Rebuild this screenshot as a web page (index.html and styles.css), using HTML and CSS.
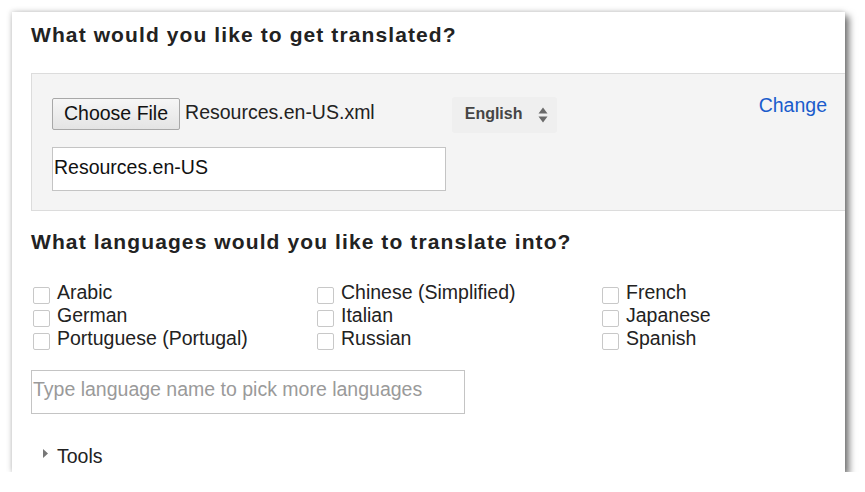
FILE: index.html
```html
<!DOCTYPE html>
<html>
<head>
<meta charset="utf-8">
<link rel="stylesheet" href="styles.css">
</head>
<body>
<div class="window">
  <h2 class="heading first">What would you like to get translated?</h2>
  <div class="source-box">
    <div class="file-row">
      <button class="file-btn">Choose File</button>
      <span class="file-name">Resources.en-US.xml</span>
      <div class="lang-select">
        <span class="lang-label">English</span>
        <svg class="updown" width="10" height="16" viewBox="0 0 10 16"><path d="M5 0.5 L9.5 6.5 H0.5 Z M5 15.5 L9.5 9.5 H0.5 Z" fill="#6a6a6a"/></svg>
      </div>
      <a class="change" href="#">Change</a>
    </div>
    <div class="name-input">Resources.en-US</div>
  </div>
  <h2 class="heading second">What languages would you like to translate into?</h2>
  <div class="langs">
    <label class="lang"><span class="cb"></span>Arabic</label>
    <label class="lang"><span class="cb"></span>Chinese (Simplified)</label>
    <label class="lang"><span class="cb"></span>French</label>
    <label class="lang"><span class="cb"></span>German</label>
    <label class="lang"><span class="cb"></span>Italian</label>
    <label class="lang"><span class="cb"></span>Japanese</label>
    <label class="lang"><span class="cb"></span>Portuguese (Portugal)</label>
    <label class="lang"><span class="cb"></span>Russian</label>
    <label class="lang"><span class="cb"></span>Spanish</label>
  </div>
  <div class="lang-input">Type language name to pick more languages</div>
  <div class="tools">
    <svg class="tri" width="5" height="9" viewBox="0 0 5 9"><path d="M0 0 L5 4.5 L0 9 Z" fill="#777"/></svg>
    <span>Tools</span>
  </div>
</div>
</body>
</html>
```

FILE: styles.css
```css
html, body {
  margin: 0;
  padding: 0;
  background: #ffffff;
}
body {
  font-family: "Liberation Sans", Arial, sans-serif;
  font-size: 19.5px;
  color: #222;
}
.window {
  margin: 12px 0 0 12px;
  width: 833px;
  height: 460px;
  background: #fff;
  overflow: hidden;
  box-shadow: 4px 4px 7px rgba(0,0,0,0.55), -1px -1px 5px rgba(0,0,0,0.15);
  padding-left: 19px;
  box-sizing: border-box;
}
.heading {
  font-size: 21px;
  font-weight: bold;
  letter-spacing: 1.1px;
  color: #222;
  margin: 0;
  line-height: 24px;
}
.heading.first {
  padding-top: 11px;
  margin-bottom: 26px;
}
.source-box {
  width: 1000px;
  height: 138px;
  box-sizing: border-box;
  background: #f4f4f4;
  border: 1px solid #dcdcdc;
  padding: 24px 0 0 20px;
}
.file-row {
  display: flex;
  align-items: flex-start;
  width: 775px;
  height: 32px;
}
.file-btn {
  font-family: "Liberation Sans", Arial, sans-serif;
  font-size: 19.5px;
  color: #111;
  height: 32px;
  box-sizing: border-box;
  padding: 0 11px 2px;
  background: linear-gradient(#f6f6f6, #e4e4e4);
  border: 1px solid #a8a8a8;
  border-radius: 2px;
  line-height: 28px;
  margin: 0;
}
.file-name {
  margin-left: 5px;
  line-height: 29px;
  color: #222;
}
.lang-select {
  margin-left: 77px;
  margin-top: -1px;
  height: 36px;
  width: 105px;
  box-sizing: border-box;
  background: #efefef;
  border-radius: 3px;
  display: flex;
  align-items: center;
  padding: 0 0 2px 13px;
  font-size: 16px;
  font-weight: bold;
  color: #454545;
}
.lang-label {
  line-height: 20px;
}
.updown {
  margin-left: 16px;
  margin-top: 2px;
}
.change {
  margin-left: auto;
  margin-top: -5px;
  line-height: 24px;
  color: #1a5ccc;
  text-decoration: none;
}
.name-input {
  margin-top: 17px;
  width: 394px;
  height: 44px;
  box-sizing: border-box;
  background: #fff;
  border: 1px solid #c4c4c4;
  line-height: 38px;
  padding-left: 1px;
  color: #111;
}
.heading.second {
  margin-top: 19px;
}
.langs {
  display: grid;
  grid-template-columns: 284px 285px 1fr;
  margin-top: 27px;
  margin-left: 2px;
}
.lang {
  display: flex;
  align-items: flex-start;
  height: 23px;
  line-height: 23px;
  color: #222;
}
.cb {
  width: 17px;
  height: 17px;
  box-sizing: border-box;
  border: 1px solid #c8c8c8;
  border-radius: 2px;
  background: #fff;
  margin: 6px 7px 0 0;
}
.lang-input {
  margin-top: 20px;
  width: 434px;
  height: 44px;
  box-sizing: border-box;
  border: 1px solid #c4c4c4;
  line-height: 36px;
  padding-left: 1px;
  color: #9a9a9a;
}
.tools {
  margin-top: 30px;
  display: flex;
  align-items: flex-start;
  line-height: 24px;
  padding-left: 12px;
  color: #222;
}
.tri {
  margin: 5px 9px 0 0;
}
```
